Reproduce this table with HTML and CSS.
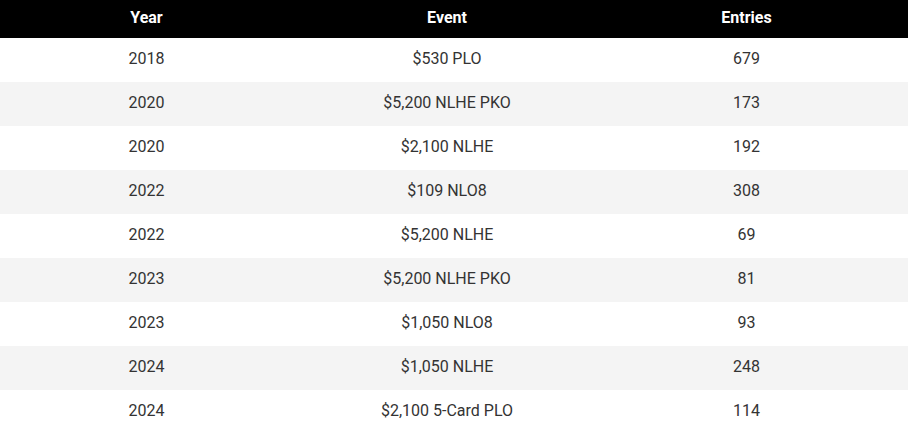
FILE: index.html
```html
<!DOCTYPE html>
<html>
<head>
<meta charset="utf-8">
<link rel="stylesheet" href="styles.css">
</head>
<body>
<table class="results">
  <thead>
    <tr><th class="c1">Year</th><th class="c2">Event</th><th class="c3">Entries</th></tr>
  </thead>
  <tbody>
    <tr><td class="c1">2018</td><td class="c2">$530 PLO</td><td class="c3">679</td></tr>
    <tr><td class="c1">2020</td><td class="c2">$5,200 NLHE PKO</td><td class="c3">173</td></tr>
    <tr><td class="c1">2020</td><td class="c2">$2,100 NLHE</td><td class="c3">192</td></tr>
    <tr><td class="c1">2022</td><td class="c2">$109 NLO8</td><td class="c3">308</td></tr>
    <tr><td class="c1">2022</td><td class="c2">$5,200 NLHE</td><td class="c3">69</td></tr>
    <tr><td class="c1">2023</td><td class="c2">$5,200 NLHE PKO</td><td class="c3">81</td></tr>
    <tr><td class="c1">2023</td><td class="c2">$1,050 NLO8</td><td class="c3">93</td></tr>
    <tr><td class="c1">2024</td><td class="c2">$1,050 NLHE</td><td class="c3">248</td></tr>
    <tr><td class="c1">2024</td><td class="c2">$2,100 5-Card PLO</td><td class="c3">114</td></tr>
  </tbody>
</table>
</body>
</html>
```
FILE: styles.css
```css
html, body {
  margin: 0;
  padding: 0;
  background: #fff;
}
.results {
  width: 908px;
  border-collapse: collapse;
  table-layout: fixed;
  font-family: Roboto, "Liberation Sans", sans-serif;
  font-size: 16px;
}
.results th {
  background: #000;
  color: #fff;
  font-weight: 700;
  height: 38px;
  padding: 0 0 4px 0;
  box-sizing: border-box;
  text-align: center;
  vertical-align: middle;
}
.results td {
  height: 44px;
  padding: 0 0 3px 0;
  box-sizing: border-box;
  text-align: center;
  vertical-align: middle;
  color: #333;
}
.results tbody tr:nth-child(even) td {
  background: #f4f4f4;
}
.c1 { width: 293px; }
.c2 { width: 308px; }
.results .c3 { width: 307px; padding-right: 16px; }
```
